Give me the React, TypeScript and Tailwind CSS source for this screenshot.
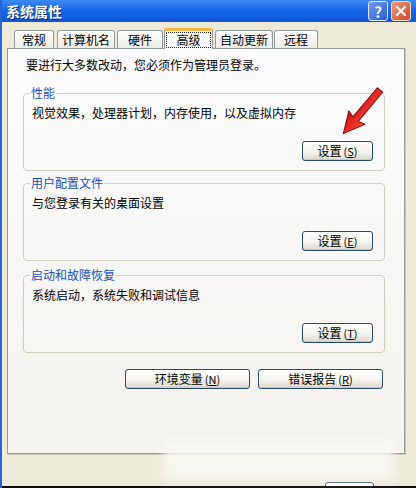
import React from "react";

function Tab({
  label,
  className,
  selected,
}: {
  label: string;
  className: string;
  selected?: boolean;
}) {
  if (selected) {
    return (
      <div
        className={
          "relative z-10 -mb-px flex h-[21px] items-start justify-center rounded-t-[3px] border-x border-t-[3px] border-x-[#919b9c] border-t-[#f5b43c] bg-[#fcfcfe] " +
          className
        }
      >
        <div className="mt-[1px] w-[45px] border border-dotted border-[#222] text-center text-[12px] leading-[14px] text-black">
          {label}
        </div>
      </div>
    );
  }
  return (
    <div
      className={
        "flex h-[18px] items-center justify-center rounded-t-[3px] border border-b-0 border-[#919b9c] bg-gradient-to-b from-white to-[#ecebe5] text-[12px] leading-[16px] text-black " +
        className
      }
    >
      {label}
    </div>
  );
}

function XpButton({
  label,
  hot,
  className,
}: {
  label: string;
  hot: string;
  className: string;
}) {
  return (
    <div
      className={
        "flex h-[20px] items-center justify-center rounded-[3px] border border-[#2a4a6e] bg-gradient-to-b from-white via-[#f6f5f0] to-[#dcd8cc] text-[12px] leading-[16px] text-black shadow-[inset_0_-1px_0_#cfc9b8] " +
        className
      }
    >
      <span>{label}</span>
      <span className="ml-[2px] text-[11px]">
        (<span className="underline">{hot}</span>)
      </span>
    </div>
  );
}

function Group({
  legend,
  text,
  hot,
  className,
}: {
  legend: string;
  text: string;
  hot: string;
  className: string;
}) {
  return (
    <fieldset
      className={
        "w-[362px] rounded-[4px] border border-[#d0d0bf] pl-[8px] pr-[11px] pt-[4px] pb-[9px] " +
        className
      }
    >
      <legend className="-ml-[2px] px-[1px] text-[12px] leading-[16px] text-[#1d4fb8]">
        {legend}
      </legend>
      <div className="text-[12px] leading-[16px] text-black">{text}</div>
      <div className="mt-[20px] flex justify-end">
        <XpButton label="设置" hot={hot} className="w-[71px]" />
      </div>
    </fieldset>
  );
}

export default function App() {
  return (
    <div className="relative flex h-[488px] w-[416px] flex-col overflow-hidden border-l-2 border-l-[#2a62d4] bg-[#ece9d8] font-['Noto_Sans_CJK_SC',sans-serif]">
      {/* title bar */}
      <div className="flex h-[22px] shrink-0 items-center justify-between bg-gradient-to-b from-[#3d8af2] via-[#1663e6] to-[#0f58d4] pl-[4px] pr-[5px]">
        <span className="text-[14px] font-bold leading-[18px] text-white [text-shadow:1px_1px_0_#0a2a80]">
          系统属性
        </span>
        <div className="flex gap-[3px]">
          <div className="flex h-[20px] w-[20px] items-center justify-center rounded-[3px] border border-[#dfe8ff] bg-gradient-to-br from-[#6f9bf0] to-[#2b5fd0] text-[15px] font-bold leading-none text-white">
            ?
          </div>
          <div className="flex h-[20px] w-[20px] items-center justify-center rounded-[3px] border border-[#f4dccf] bg-gradient-to-br from-[#ee9a78] to-[#c9482a]">
            <svg width="12" height="12" viewBox="0 0 12 12">
              <path
                d="M2 2 L10 10 M10 2 L2 10"
                stroke="#fff4ea"
                strokeWidth="2.2"
                strokeLinecap="round"
              />
            </svg>
          </div>
        </div>
      </div>

      {/* tabs */}
      <div className="mt-[6px] flex h-[20px] shrink-0 items-end pl-[12px]">
        <Tab label="常规" className="w-[40px]" />
        <Tab label="计算机名" className="ml-[3px] w-[58px]" />
        <Tab label="硬件" className="ml-[2px] w-[46px]" />
        <Tab label="高级" className="ml-[1px] w-[49px]" selected />
        <Tab label="自动更新" className="ml-[2px] w-[58px]" />
        <Tab label="远程" className="ml-[1px] w-[44px]" />
      </div>

      {/* panel */}
      <div className="ml-[5px] h-[406px] w-[398px] shrink-0 border border-[#919b9c] bg-gradient-to-b from-[#fcfcfe] to-[#f4f3ee] pl-[15px] pt-[8px] shadow-[1px_1px_0_#c9c6b6]">
        <div className="pl-[3px] text-[12px] leading-[16px] text-black">
          要进行大多数改动，您必须作为管理员登录。
        </div>
        <Group
          legend="性能"
          text="视觉效果，处理器计划，内存使用，以及虚拟内存"
          hot="S"
          className="mt-[12px]"
        />
        <Group
          legend="用户配置文件"
          text="与您登录有关的桌面设置"
          hot="E"
          className="mt-[4px]"
        />
        <Group
          legend="启动和故障恢复"
          text="系统启动，系统失败和调试信息"
          hot="T"
          className="mt-[6px]"
        />
        <div className="mt-[16px] flex w-[362px] justify-end gap-[8px] pr-[2px]">
          <XpButton label="环境变量" hot="N" className="w-[125px]" />
          <XpButton label="错误报告" hot="R" className="w-[125px]" />
        </div>
      </div>

      <div className="h-[28px] shrink-0" />
      <div className="h-[4px] shrink-0 overflow-hidden">
        <div className="ml-[323px] h-[12px] w-[49px] rounded-[3px] border border-[#2a4a6e] bg-white" />
      </div>
      <div className="h-[2px] shrink-0 bg-[#111]" />

      {/* erased watermark smear */}
      <div className="pointer-events-none absolute left-[162px] top-[440px] h-[40px] w-[230px] bg-[#fbfaf7] opacity-80 blur-[4px]" />

      {/* red arrow */}
      <svg
        className="pointer-events-none absolute left-0 top-0"
        width="416"
        height="488"
        viewBox="0 0 416 488"
      >
        <defs>
          <linearGradient id="ar" x1="0" y1="0" x2="0" y2="1">
            <stop offset="0" stopColor="#ff4a3a" />
            <stop offset="1" stopColor="#c80f0f" />
          </linearGradient>
        </defs>
        <g transform="translate(378 90) rotate(130)">
          <polygon
            points="0,-3.5 38,-3.5 36,-10.5 57,0 36,10.5 38,3.5 0,3.5"
            fill="url(#ar)"
            stroke="#8a0a0a"
            strokeWidth="1"
            strokeLinejoin="round"
          />
        </g>
      </svg>
    </div>
  );
}
